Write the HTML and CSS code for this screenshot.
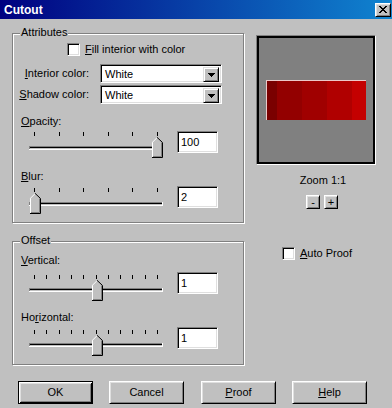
FILE: index.html
```html
<!DOCTYPE html>
<html>
<head>
<meta charset="utf-8">
<title>Cutout</title>
<link rel="stylesheet" href="styles.css">
</head>
<body>
<div class="window">
  <div class="titlebar">
    <span class="title">Cutout</span>
    <button class="close" aria-label="Close">
      <svg width="8" height="7" viewBox="0 0 8 7"><path fill="#000" d="M0 0h2v1H0zM6 0h2v1H6zM1 1h2v1H1zM5 1h2v1H5zM2 2h4v1H2zM3 3h2v1H3zM2 4h4v1H2zM1 5h2v1H1zM5 5h2v1H5zM0 6h2v1H0zM6 6h2v1H6z"/></svg>
    </button>
  </div>

  <div class="main">
    <div class="left">
      <div class="group attributes">
        <span class="group-label">Attributes</span>
        <div class="check-row fill-row">
          <span class="checkbox"></span>
          <span class="check-text"><u>F</u>ill interior with color</span>
        </div>
        <div class="combo-row first">
          <span class="combo-label"><u>I</u>nterior color:</span>
          <div class="combo">
            <span class="combo-text">White</span>
            <span class="combo-btn"><svg width="7" height="4" viewBox="0 0 7 4"><path fill="#000" d="M0 0h7v1H0zM1 1h5v1H1zM2 2h3v1H2zM3 3h1v1H3z"/></svg></span>
          </div>
        </div>
        <div class="combo-row second">
          <span class="combo-label"><u>S</u>hadow color:</span>
          <div class="combo">
            <span class="combo-text">White</span>
            <span class="combo-btn"><svg width="7" height="4" viewBox="0 0 7 4"><path fill="#000" d="M0 0h7v1H0zM1 1h5v1H1zM2 2h3v1H2zM3 3h1v1H3z"/></svg></span>
          </div>
        </div>

        <div class="field-label opacity-label"><u>O</u>pacity:</div>
        <div class="slider-row opacity-row">
          <svg class="slider" width="142" height="28" viewBox="0 0 142 28">
            <g fill="#000">
              <rect x="6" y="2" width="1" height="4"/><rect x="31" y="2" width="1" height="4"/><rect x="55" y="2" width="1" height="4"/><rect x="80" y="2" width="1" height="4"/><rect x="104" y="2" width="1" height="4"/><rect x="129" y="2" width="1" height="4"/>
            </g>
            <rect x="1" y="16" width="134" height="1" fill="#808080"/>
            <rect x="1" y="17" width="1" height="2" fill="#808080"/>
            <rect x="2" y="17" width="132" height="1" fill="#000"/>
            <rect x="1" y="19" width="134" height="1" fill="#fff"/>
            <rect x="134" y="16" width="1" height="4" fill="#fff"/>
            <g transform="translate(124 7)">
              <path d="M0 5L5 0L10 5V20H0Z" fill="#c0c0c0"/>
              <path d="M0.5 20V5.2L5.2 0.5" stroke="#fff" fill="none"/>
              <path d="M9.5 5.5V19.5H1" stroke="#808080" fill="none"/>
              <path d="M5 0.3L10.5 5.5V20.5H0" stroke="#000" fill="none"/>
            </g>
          </svg>
          <div class="edit">100</div>
        </div>

        <div class="field-label blur-label"><u>B</u>lur:</div>
        <div class="slider-row blur-row">
          <svg class="slider" width="142" height="28" viewBox="0 0 142 28">
            <g fill="#000">
              <rect x="6" y="2" width="1" height="4"/><rect x="31" y="2" width="1" height="4"/><rect x="55" y="2" width="1" height="4"/><rect x="80" y="2" width="1" height="4"/><rect x="104" y="2" width="1" height="4"/><rect x="129" y="2" width="1" height="4"/>
            </g>
            <rect x="1" y="16" width="134" height="1" fill="#808080"/>
            <rect x="1" y="17" width="1" height="2" fill="#808080"/>
            <rect x="2" y="17" width="132" height="1" fill="#000"/>
            <rect x="1" y="19" width="134" height="1" fill="#fff"/>
            <rect x="134" y="16" width="1" height="4" fill="#fff"/>
            <g transform="translate(2 7)">
              <path d="M0 5L5 0L10 5V20H0Z" fill="#c0c0c0"/>
              <path d="M0.5 20V5.2L5.2 0.5" stroke="#fff" fill="none"/>
              <path d="M9.5 5.5V19.5H1" stroke="#808080" fill="none"/>
              <path d="M5 0.3L10.5 5.5V20.5H0" stroke="#000" fill="none"/>
            </g>
          </svg>
          <div class="edit">2</div>
        </div>
      </div>

      <div class="group offset">
        <span class="group-label">Offset</span>
        <div class="field-label vertical-label"><u>V</u>ertical:</div>
        <div class="slider-row vertical-row">
          <svg class="slider" width="142" height="28" viewBox="0 0 142 28">
            <g fill="#000">
              <rect x="6" y="2" width="1" height="4"/><rect x="18" y="2" width="1" height="4"/><rect x="31" y="2" width="1" height="4"/><rect x="43" y="2" width="1" height="4"/><rect x="55" y="2" width="1" height="4"/><rect x="68" y="2" width="1" height="4"/><rect x="80" y="2" width="1" height="4"/><rect x="92" y="2" width="1" height="4"/><rect x="104" y="2" width="1" height="4"/><rect x="117" y="2" width="1" height="4"/><rect x="129" y="2" width="1" height="4"/>
            </g>
            <rect x="1" y="15" width="134" height="1" fill="#808080"/>
            <rect x="1" y="16" width="1" height="2" fill="#808080"/>
            <rect x="2" y="16" width="132" height="1" fill="#000"/>
            <rect x="1" y="18" width="134" height="1" fill="#fff"/>
            <rect x="134" y="15" width="1" height="4" fill="#fff"/>
            <g transform="translate(64 7)">
              <path d="M0 5L5 0L10 5V20H0Z" fill="#c0c0c0"/>
              <path d="M0.5 20V5.2L5.2 0.5" stroke="#fff" fill="none"/>
              <path d="M9.5 5.5V19.5H1" stroke="#808080" fill="none"/>
              <path d="M5 0.3L10.5 5.5V20.5H0" stroke="#000" fill="none"/>
            </g>
          </svg>
          <div class="edit">1</div>
        </div>

        <div class="field-label horizontal-label">Ho<u>r</u>izontal:</div>
        <div class="slider-row horizontal-row">
          <svg class="slider" width="142" height="28" viewBox="0 0 142 28">
            <g fill="#000">
              <rect x="6" y="2" width="1" height="4"/><rect x="18" y="2" width="1" height="4"/><rect x="31" y="2" width="1" height="4"/><rect x="43" y="2" width="1" height="4"/><rect x="55" y="2" width="1" height="4"/><rect x="68" y="2" width="1" height="4"/><rect x="80" y="2" width="1" height="4"/><rect x="92" y="2" width="1" height="4"/><rect x="104" y="2" width="1" height="4"/><rect x="117" y="2" width="1" height="4"/><rect x="129" y="2" width="1" height="4"/>
            </g>
            <rect x="1" y="15" width="134" height="1" fill="#808080"/>
            <rect x="1" y="16" width="1" height="2" fill="#808080"/>
            <rect x="2" y="16" width="132" height="1" fill="#000"/>
            <rect x="1" y="18" width="134" height="1" fill="#fff"/>
            <rect x="134" y="15" width="1" height="4" fill="#fff"/>
            <g transform="translate(64 7)">
              <path d="M0 5L5 0L10 5V20H0Z" fill="#c0c0c0"/>
              <path d="M0.5 20V5.2L5.2 0.5" stroke="#fff" fill="none"/>
              <path d="M9.5 5.5V19.5H1" stroke="#808080" fill="none"/>
              <path d="M5 0.3L10.5 5.5V20.5H0" stroke="#000" fill="none"/>
            </g>
          </svg>
          <div class="edit">1</div>
        </div>
      </div>
    </div>

    <div class="right">
      <div class="preview">
        <div class="preview-inner">
          <div class="swatch"></div>
        </div>
      </div>
      <div class="zoom-label">Zoom 1:1</div>
      <div class="zoom-btns">
        <button class="small-btn">-</button>
        <button class="small-btn">+</button>
      </div>
      <div class="check-row auto-row">
        <span class="checkbox"></span>
        <span class="check-text"><u>A</u>uto Proof</span>
      </div>
    </div>
  </div>

  <div class="buttons">
    <button class="btn default">OK</button>
    <button class="btn">Cancel</button>
    <button class="btn wide-gap"><u>P</u>roof</button>
    <button class="btn"><u>H</u>elp</button>
  </div>
</div>
</body>
</html>
```

FILE: styles.css
```css
* { box-sizing: border-box; }

html, body {
  margin: 0;
  padding: 0;
  background: #c0c0c0;
}

body {
  font-family: "Liberation Sans", Arial, sans-serif;
  font-size: 11px;
  line-height: 13px;
  color: #000;
}

u { text-decoration: underline; text-underline-offset: 1px; }

.window {
  width: 392px;
  height: 408px;
  background: #c0c0c0;
  overflow: hidden;
}

/* Title bar */
.titlebar {
  height: 19px;
  background: linear-gradient(90deg, #000080 0%, #1084d0 100%);
  display: flex;
  align-items: center;
  justify-content: space-between;
  padding: 0 1px 0 4px;
}

.title {
  color: #fff;
  font-weight: bold;
  font-size: 12px;
  line-height: 14px;
}

.close {
  width: 16px;
  height: 14px;
  margin: 0;
  padding: 0;
  background: #c0c0c0;
  border: 1px solid;
  border-color: #fff #000 #000 #fff;
  box-shadow: inset 1px 1px #dfdfdf, inset -1px -1px #808080;
  display: flex;
  align-items: center;
  justify-content: center;
}

.close svg { display: block; }

/* Main area */
.main {
  display: flex;
  padding: 14px 0 0 12px;
}

.left {
  width: 232px;
  display: flex;
  flex-direction: column;
}

.group {
  position: relative;
  border: 1px solid #808080;
  box-shadow: inset 1px 1px #fff, 1px 1px #fff;
}

.group-label {
  position: absolute;
  top: -8px;
  left: 7px;
  padding: 0 1px;
  background: #c0c0c0;
}

.attributes { height: 190px; }
.offset { height: 124px; margin-top: 18px; }

/* checkboxes */
.check-row {
  display: flex;
  align-items: center;
  height: 13px;
}

.fill-row { margin: 9px 0 0 54px; }

.checkbox {
  flex: none;
  width: 13px;
  height: 13px;
  background: #fff;
  border: 1px solid;
  border-color: #808080 #fff #fff #808080;
  box-shadow: inset 1px 1px #000, inset -1px -1px #dfdfdf;
}

.check-text { margin-left: 5px; white-space: nowrap; }

/* combos */
.combo-row {
  display: flex;
  align-items: center;
  height: 19px;
}

.combo-row.first { margin-top: 8px; }
.combo-row.second { margin-top: 2px; }

.combo-label {
  width: 76px;
  margin-right: 11px;
  text-align: right;
  white-space: nowrap;
}

.combo {
  width: 122px;
  height: 19px;
  display: flex;
  background: #fff;
  border: 1px solid;
  border-color: #808080 #fff #fff #808080;
  box-shadow: inset 1px 1px #000, inset -1px -1px #dfdfdf;
  padding: 2px;
}

.combo-text {
  flex: 1;
  padding-left: 2px;
  line-height: 15px;
}

.combo-btn {
  width: 16px;
  height: 15px;
  background: #c0c0c0;
  border: 1px solid;
  border-color: #dfdfdf #000 #000 #dfdfdf;
  box-shadow: inset 1px 1px #fff, inset -1px -1px #808080;
  display: flex;
  align-items: center;
  justify-content: center;
}

.combo-btn svg { display: block; }

/* sliders */
.field-label {
  padding-left: 8px;
  height: 13px;
  white-space: nowrap;
}

.opacity-label { margin-top: 11px; }
.blur-label { margin-top: 12px; }
.vertical-label { margin-top: 12px; }
.horizontal-label { margin-top: 10px; }

.slider-row {
  display: flex;
  align-items: flex-start;
}

.opacity-row { margin-top: 2px; }
.opacity-row .edit { margin-top: 1px; }
.blur-row { margin-top: 3px; }
.vertical-row { margin-top: 5px; }
.vertical-row .slider { margin-top: 1px; }
.horizontal-row { margin-top: 3px; }
.horizontal-row .slider { margin-top: 1px; }

.slider {
  display: block;
  flex: none;
  margin-left: 15px;
}

.edit {
  flex: none;
  margin-left: 7px;
  width: 41px;
  height: 22px;
  background: #fff;
  border: 1px solid;
  border-color: #808080 #fff #fff #808080;
  box-shadow: inset 1px 1px #000, inset -1px -1px #dfdfdf;
  padding: 0 2px 0 3px;
  line-height: 20px;
}

/* right column */
.right {
  width: 120px;
  margin-left: 12px;
  display: flex;
  flex-direction: column;
}

.preview {
  margin-top: 2px;
  width: 120px;
  height: 130px;
  border: 1px solid;
  border-color: #808080 #fff #fff #808080;
}

.preview-inner {
  height: 100%;
  border: 2px solid #000;
  background: #808080;
  padding: 42px 0 0 7px;
}

.swatch {
  width: 100px;
  height: 40px;
  border-top: 1px solid #ecc8c8;
  border-left: 1px solid #ecc8c8;
  background: linear-gradient(90deg,
    #7a0000 0 10px,
    #930000 10px 35px,
    #a00000 35px 60px,
    #b00000 60px 85px,
    #c40000 85px 100px);
}

.zoom-label {
  margin-top: 9px;
  padding-left: 14px;
  text-align: center;
}

.zoom-btns {
  display: flex;
  justify-content: center;
  gap: 4px;
  margin-top: 8px;
  padding-left: 12px;
}

.small-btn {
  width: 14px;
  height: 14px;
  margin: 0;
  padding: 0;
  font: inherit;
  line-height: 11px;
  color: #000;
  background: #c0c0c0;
  border: 1px solid;
  border-color: #fff #000 #000 #fff;
  box-shadow: inset 1px 1px #dfdfdf, inset -1px -1px #808080;
}

.auto-row {
  margin-top: 38px;
  padding-left: 26px;
}

/* bottom buttons */
.buttons {
  display: flex;
  gap: 16px;
  padding-left: 18px;
  margin-top: 16px;
}

.btn {
  width: 75px;
  height: 23px;
  margin: 0;
  padding: 0;
  font: inherit;
  color: #000;
  background: #c0c0c0;
  border: 1px solid;
  border-color: #fff #000 #000 #fff;
  box-shadow: inset 1px 1px #dfdfdf, inset -1px -1px #808080;
}

.btn.default {
  border-color: #000;
  box-shadow: inset 1px 1px #fff, inset -1px -1px #000, inset 2px 2px #dfdfdf, inset -2px -2px #808080;
}

.btn.wide-gap { margin-left: 1px; }
```
